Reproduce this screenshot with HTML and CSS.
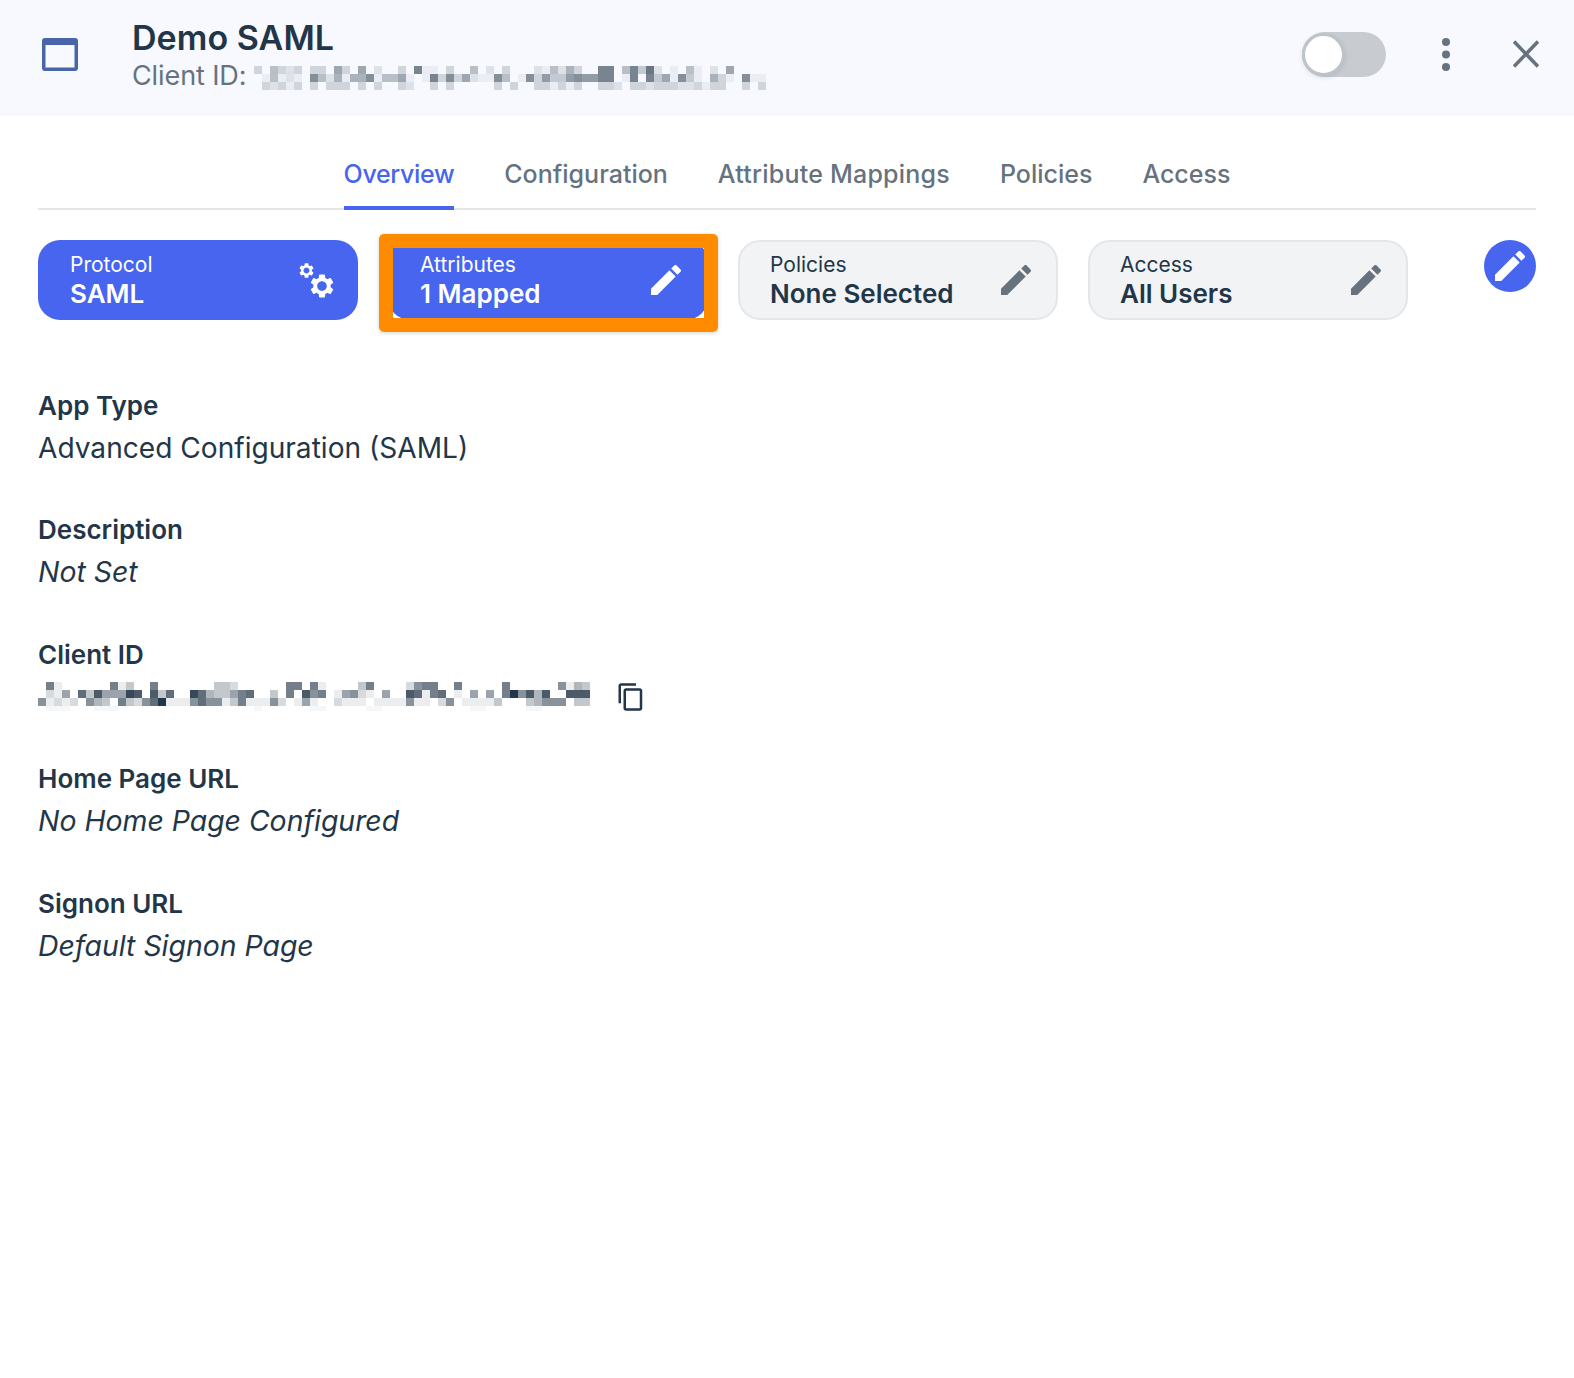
FILE: index.html
```html
<!DOCTYPE html>
<html lang="en">
<head>
<meta charset="utf-8">
<title>Demo SAML</title>
<link rel="stylesheet" href="styles.css">
</head>
<body>
<svg class="defs" aria-hidden="true">
  <symbol id="i-edit" viewBox="0 0 24 24"><path d="M3 17.25V21h3.75L17.81 9.94l-3.75-3.75L3 17.25zM20.71 7.04c.39-.39.39-1.02 0-1.41l-2.34-2.34c-.39-.39-1.02-.39-1.41 0l-1.83 1.83 3.75 3.75 1.83-1.83z"/></symbol>
  <symbol id="i-gear" viewBox="2 2 20 20"><path d="M19.14 12.94c.04-.3.06-.61.06-.94 0-.32-.02-.64-.07-.94l2.03-1.58c.18-.14.23-.41.12-.61l-1.92-3.32c-.12-.22-.37-.29-.59-.22l-2.39.96c-.5-.38-1.03-.7-1.62-.94l-.36-2.54c-.04-.24-.24-.41-.48-.41h-3.84c-.24 0-.43.17-.47.41l-.36 2.54c-.59.24-1.13.57-1.62.94l-2.39-.96c-.22-.08-.47 0-.59.22L2.74 8.87c-.12.21-.08.47.12.61l2.03 1.58c-.05.3-.09.63-.09.94s.02.64.07.94l-2.03 1.58c-.18.14-.23.41-.12.61l1.92 3.32c.12.22.37.29.59.22l2.39-.96c.5.38 1.03.7 1.62.94l.36 2.54c.05.24.24.41.48.41h3.84c.24 0 .44-.17.47-.41l.36-2.54c.59-.24 1.13-.56 1.62-.94l2.39.96c.22.08.47 0 .59-.22l1.92-3.32c.12-.22.07-.47-.12-.61l-2.01-1.58zM12 16c-2.2 0-4-1.8-4-4s1.8-4 4-4 4 1.8 4 4-1.8 4-4 4z"/></symbol>
</svg>

<header class="head">
  <svg class="head-icon" viewBox="0 0 36 33"><path fill-rule="evenodd" d="M3 0h30a3 3 0 0 1 3 3v27a3 3 0 0 1-3 3H3a3 3 0 0 1-3-3V3a3 3 0 0 1 3-3zM3.500 7v22.500h29V7z"/></svg>
  <div class="head-text">
    <div class="head-title">Demo SAML</div>
    <div class="head-sub"><span>Client ID:</span><svg class="blur blur-head" data-color="#6b7884" width="512" height="24" viewBox="0 0 512 24"
      data-rows="30532303307307020030a1103005020300021526300aa05a4b20105102070000|0151210952616691557101a39372119501938448988aa01a0a47194106310911|0323130303330303003200303000003030033131300332033233322313300303"></svg></div>
  </div>
  <div class="head-actions">
    <div class="toggle"><span class="knob"></span></div>
    <svg class="dots" viewBox="0 0 8 33"><circle cx="4" cy="4" r="4"/><circle cx="4" cy="16.500" r="4"/><circle cx="4" cy="29" r="4"/></svg>
    <svg class="close" viewBox="0 0 26 28"><path d="M1 1.500 25 26.500M25 1.500 1 26.500"/></svg>
  </div>
</header>

<main class="main">
  <nav class="tabs">
    <a class="tab tab-active">Overview</a>
    <a class="tab">Configuration</a>
    <a class="tab tab-wide">Attribute Mappings</a>
    <a class="tab">Policies</a>
    <a class="tab">Access</a>
  </nav>

  <section class="cards">
    <div class="card card-blue">
      <div class="card-text"><div class="card-label">Protocol</div><div class="card-value">SAML</div></div>
      <svg class="gears" viewBox="0 0 36 36"><use href="#i-gear" x="1" y="1" width="15" height="15"/><use href="#i-gear" x="12" y="12" width="24" height="24"/></svg>
    </div>
    <div class="card card-blue">
      <div class="card-text"><div class="card-label">Attributes</div><div class="card-value">1 Mapped</div></div>
      <svg class="pencil"><use href="#i-edit"/></svg>
      <span class="callout"></span>
    </div>
    <div class="card card-grey">
      <div class="card-text"><div class="card-label">Policies</div><div class="card-value">None Selected</div></div>
      <svg class="pencil"><use href="#i-edit"/></svg>
    </div>
    <div class="card card-grey">
      <div class="card-text"><div class="card-label">Access</div><div class="card-value">All Users</div></div>
      <svg class="pencil"><use href="#i-edit"/></svg>
    </div>
    <button class="edit-btn"><svg class="pencil"><use href="#i-edit"/></svg></button>
  </section>

  <section class="fields">
    <div class="field"><div class="field-label">App Type</div><div class="field-value">Advanced Configuration (SAML)</div></div>
    <div class="field"><div class="field-label">Description</div><div class="field-value field-empty">Not Set</div></div>
    <div class="field"><div class="field-label">Client ID</div>
      <div class="field-value field-copy">
        <svg class="blur blur-client" data-color="#233748" width="552" height="29" viewBox="0 0 552 29"
          data-rows="071000000713007000000033200000077071000037000026770070000070000006143|02150839555a9093800a843357800307096701562105009817801050507b694900999|612120643073268b11168661371116201510021110111161102601111300034666033|011100011100000000000000000100000011000001100000000000110000011000000"></svg>
        <svg class="copy" viewBox="0 0 24 24"><path d="M16 1H4c-1.100 0-2 .9-2 2v14h2V3h12V1zm3 4H8c-1.100 0-2 .9-2 2v14c0 1.100.9 2 2 2h11c1.100 0 2-.9 2-2V7c0-1.100-.9-2-2-2zm0 16H8V7h11v14z"/></svg>
      </div>
    </div>
    <div class="field"><div class="field-label">Home Page URL</div><div class="field-value field-empty">No Home Page Configured</div></div>
    <div class="field"><div class="field-label">Signon URL</div><div class="field-value field-empty">Default Signon Page</div></div>
  </section>
</main>
<script src="app.js"></script>
</body>
</html>
```

FILE: styles.css
```css
* { box-sizing: border-box; }
html, body { margin: 0; padding: 0; background: #fff; }
body { font-family: Inter, "Liberation Sans", sans-serif; color: #233648; height: 1378px; overflow: hidden; }
.defs { display: none; }

.head { height: 116px; background: #f7f9fe; display: flex; align-items: center; padding: 0 35px 0 42px; }
.head-icon { width: 36px; height: 33px; fill: #4a64a8; flex: none; margin: 0 54px 8px 0; }
.head-text { display: flex; flex-direction: column; padding-bottom: 3px; }
.head-title { font-size: 34px; line-height: 38px; font-weight: 600; letter-spacing: .05px; color: #233648; }
.head-sub { display: flex; align-items: center; gap: 8px; font-size: 27px; line-height: 37px; letter-spacing: -.1px; color: #66737f; }
.blur { display: block; flex: none; }
.blur-head { margin-top: 4px; }
.head-actions { margin-left: auto; display: flex; align-items: center; padding-bottom: 8px; }
.toggle { width: 84px; height: 45px; border-radius: 23px; background: #c8ccd1; display: flex; align-items: center; }
.knob { width: 43px; height: 43px; border-radius: 50%; background: #fff; border: 3px solid #bdc3c8; box-shadow: 0 2px 4px rgba(35,54,72,.12); }
.dots { width: 8px; height: 33px; fill: #66737f; margin-left: 56px; }
.close { width: 26px; height: 28px; fill: none; stroke: #66737f; stroke-width: 3.600; margin-left: 63px; }

.main { padding: 0 38px; }
.tabs { display: flex; justify-content: center; gap: 50px; height: 94px; padding-top: 36px; border-bottom: 2px solid #e4e6e9; }
.tab { font-size: 25px; line-height: 44px; height: 58px; font-weight: 500; color: #66737f; }
.tab-active { color: #4765ef; border-bottom: 4px solid #4765ef; letter-spacing: -.35px; }
.tab-wide { letter-spacing: .22px; }

.cards { display: flex; gap: 30px; margin-top: 30px; align-items: flex-start; }
.card { position: relative; width: 320px; height: 80px; border-radius: 22px; display: flex; align-items: center; justify-content: space-between; padding: 0 22px 0 32px; }
.card-blue { background: #4765ef; color: #fff; }
.card-grey { background: #f1f3f5; border: 2px solid #e4e6e9; padding: 0 20px 0 30px; }
.card-text { margin-top: -2px; }
.card-label { font-size: 21px; line-height: 28px; }
.card-value { font-size: 26px; line-height: 29px; font-weight: 600; }
.pencil { width: 40px; height: 40px; fill: #fff; flex: none; }
.card-grey .pencil { fill: #66737f; }
.gears { width: 36px; height: 36px; fill: #fff; flex: none; margin-right: 2px; }
.callout { position: absolute; left: -9px; right: -10px; top: -6px; bottom: -12px; border: 14px solid #ff8c00; border-radius: 5px; box-shadow: 0 1px 4px rgba(0,0,0,.18); }
.edit-btn { margin-left: auto; width: 52px; height: 52px; border-radius: 50%; border: 0; padding: 0; background: #4765ef; display: flex; align-items: center; justify-content: center; }

.fields { display: flex; flex-direction: column; gap: 40.500px; margin-top: 67.500px; }
.field { height: 84px; }
.field-label { font-size: 26px; line-height: 36px; font-weight: 600; color: #233648; }
.field-value { font-size: 28.100px; line-height: 48px; color: #233648; }
.field-empty { font-size: 28.400px; font-style: italic; }
.field-copy { display: flex; align-items: center; gap: 26px; height: 48px; }
.copy { width: 30px; height: 30px; fill: #233648; flex: none; }
```

FILE: app.js
```js
var SVG_NS = "http://www.w3.org/2000/svg";
document.querySelectorAll("svg.blur").forEach(function (svg) {
  var color = svg.getAttribute("data-color");
  svg.getAttribute("data-rows").split("|").forEach(function (row, y) {
    row.split("").forEach(function (ch, x) {
      var v = parseInt(ch, 16);
      if (!v) return;
      var r = document.createElementNS(SVG_NS, "rect");
      r.setAttribute("x", x * 8);
      r.setAttribute("y", y * 8);
      r.setAttribute("width", 8);
      r.setAttribute("height", 8);
      r.setAttribute("fill", color);
      r.setAttribute("fill-opacity", y === 3 ? 0.04 : v / 11);
      svg.appendChild(r);
    });
  });
});
```
